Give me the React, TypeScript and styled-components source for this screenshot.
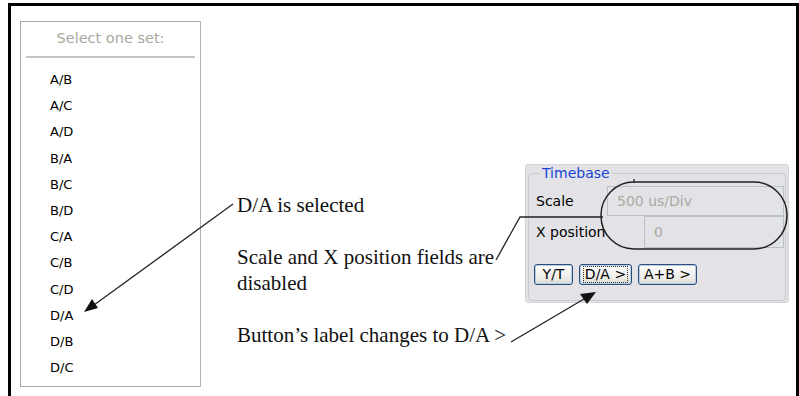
import * as React from 'react';
import styled, { createGlobalStyle } from 'styled-components';

const GlobalStyle = createGlobalStyle`
  html, body {
    margin: 0;
    padding: 0;
    background: #ffffff;
  }
`;

const SETS = ['A/B', 'A/C', 'A/D', 'B/A', 'B/C', 'B/D', 'C/A', 'C/B', 'C/D', 'D/A', 'D/B', 'D/C'];

const Page = styled.div`
  position: relative;
  width: 799px;
  height: 396px;
  overflow: hidden;
`;

const Frame = styled.div`
  box-sizing: border-box;
  margin: 3px 0 0 8px;
  width: 791px;
  height: 393px;
  border: 3px solid #000;
  border-bottom: none;
  display: flex;
  align-items: flex-start;
  padding: 15px 0 0 9px;
`;

const ListBox = styled.div`
  box-sizing: border-box;
  width: 181px;
  height: 366px;
  border: 1px solid #a9a9a9;
  border-right-color: #b4b4b4;
  display: flex;
  flex-direction: column;
  font-family: 'DejaVu Sans', sans-serif;
  font-size: 13px;
`;

const ListTitle = styled.div`
  color: #a8a8a0;
  text-align: center;
  font-size: 14.5px;
  padding: 6px 0 7px;
  margin: 0 5px;
  border-bottom: 2px solid #c4c4c4;
  line-height: 21px;
`;

const ListItems = styled.ul`
  list-style: none;
  margin: 0;
  padding: 9px 0 0 29px;
`;

const ListItem = styled.li`
  height: 26.2px;
  line-height: 26px;
  color: #000;
`;

const Notes = styled.div`
  margin: 171px 0 0 36px;
  width: 290px;
  flex-shrink: 0;
  font-family: 'Liberation Serif', serif;
  font-size: 21px;
  line-height: 26px;
  color: #111;
  white-space: nowrap;
`;

const Note = styled.p<{ $gap: number }>`
  margin: 0 0 ${(p) => p.$gap}px 0;
`;

const Panel = styled.div`
  box-sizing: border-box;
  margin: 143px 0 0 -2px;
  width: 264px;
  height: 139px;
  background: #e3e3e7;
  border: 1px solid #d6d6da;
  border-radius: 3px;
  padding: 0 2px 0 2px;
  font-family: 'DejaVu Sans', sans-serif;
  font-size: 14px;
`;

const Group = styled.fieldset`
  box-sizing: border-box;
  margin: 0;
  height: 136px;
  border: 1px solid #c9c9cc;
  border-radius: 4px;
  padding: 5px 0 0 5px;
`;

const Legend = styled.legend`
  color: #1744d6;
  padding: 0 2px;
  margin-left: 6px;
  font-size: 14px;
  line-height: 16px;
`;

const FieldRow = styled.div<{ $inputLeft: number; $height: number }>`
  display: grid;
  grid-template-columns: ${(p) => p.$inputLeft}px 1fr;
  align-items: center;
  height: ${(p) => p.$height}px;
`;

const FieldLabel = styled.span`
  color: #000;
  padding-left: 2px;
`;

const FieldBox = styled.div`
  box-sizing: border-box;
  height: 100%;
  border: 1px solid #b7c3c6;
  margin-right: 1px;
  color: #aaa9a0;
  padding-left: 9px;
  display: flex;
  align-items: center;
`;

const ButtonRow = styled.div`
  display: flex;
  gap: 6px;
  margin-top: 16px;
`;

const Button = styled.button<{ $width: number; $focused?: boolean }>`
  box-sizing: border-box;
  width: ${(p) => p.$width}px;
  height: 21px;
  padding: 0;
  border: 1px solid #2c4f7c;
  border-radius: 3px;
  background: linear-gradient(#ffffff, #ecebe6 70%, #d9d8d2);
  font-family: 'DejaVu Sans', sans-serif;
  font-size: 14px;
  color: #000;
  line-height: 17px;
  box-shadow: inset 0 0 0 1px #b9cbe3;

  span {
    display: inline-block;
    padding: 0 2px;
    outline: ${(p) => (p.$focused ? '1px dotted #333' : 'none')};
    outline-offset: -1px;
  }
`;

const Overlay = styled.svg`
  position: absolute;
  left: 0;
  top: 0;
  pointer-events: none;
`;

export default function App() {
  return (
    <Page>
      <GlobalStyle />
      <Frame>
        <ListBox>
          <ListTitle>Select one set:</ListTitle>
          <ListItems>
            {SETS.map((s) => (
              <ListItem key={s}>{s}</ListItem>
            ))}
          </ListItems>
        </ListBox>

        <Notes>
          <Note $gap={26}>D/A is selected</Note>
          <Note $gap={26}>
            Scale and X position fields are
            <br />
            disabled
          </Note>
          <Note $gap={0}>Button’s label changes to D/A &gt;</Note>
        </Notes>

        <Panel>
          <Group>
            <Legend>Timebase</Legend>
            <FieldRow $inputLeft={73} $height={30}>
              <FieldLabel>Scale</FieldLabel>
              <FieldBox>500 us/Div</FieldBox>
            </FieldRow>
            <FieldRow $inputLeft={110} $height={32}>
              <FieldLabel>X position</FieldLabel>
              <FieldBox>0</FieldBox>
            </FieldRow>
            <ButtonRow>
              <Button $width={39}>
                <span>Y/T</span>
              </Button>
              <Button $width={53} $focused>
                <span>D/A &gt;</span>
              </Button>
              <Button $width={59}>
                <span>A+B &gt;</span>
              </Button>
            </ButtonRow>
          </Group>
        </Panel>
      </Frame>

      <Overlay width={799} height={396} viewBox="0 0 799 396">
        <g stroke="#222" strokeWidth={1.3} fill="none">
          <line x1={233} y1={204} x2={94} y2={305} />
          <polyline points="496,260 520,217 603,217" />
          <line x1={511} y1={342} x2={584} y2={299} />
          <rect x={601} y={182} width={186} height={67} rx={33} ry={33} strokeWidth={1.5} />
          <line x1={634} y1={179} x2={634} y2={183} />
        </g>
        <g fill="#111">
          <polygon points="84,312 92,299 98,308" />
          <polygon points="596,292 580,294 587,304" />
        </g>
      </Overlay>
    </Page>
  );
}
